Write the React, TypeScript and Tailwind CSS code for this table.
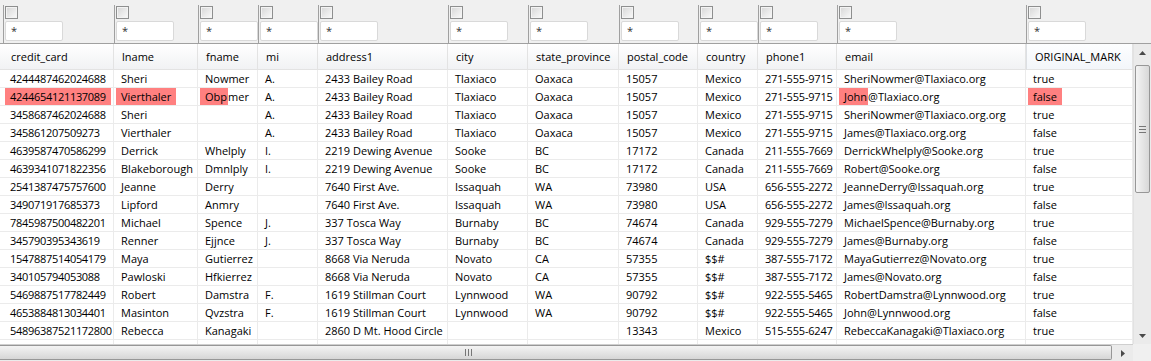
import React from "react";

const GRID =
  "grid grid-cols-[3px_111px_84px_60px_60px_130px_80px_91px_79px_60px_79px_189px_107px]";

const headers = [
  "credit_card",
  "lname",
  "fname",
  "mi",
  "address1",
  "city",
  "state_province",
  "postal_code",
  "country",
  "phone1",
  "email",
  "ORIGINAL_MARK",
];

const rows: string[][] = [
  ["4244487462024688", "Sheri", "Nowmer", "A.", "2433 Bailey Road", "Tlaxiaco", "Oaxaca", "15057", "Mexico", "271-555-9715", "SheriNowmer@Tlaxiaco.org", "true"],
  ["4244654121137089", "Vierthaler", "Obpmer", "A.", "2433 Bailey Road", "Tlaxiaco", "Oaxaca", "15057", "Mexico", "271-555-9715", "John@Tlaxiaco.org", "false"],
  ["3458687462024688", "Sheri", "", "A.", "2433 Bailey Road", "Tlaxiaco", "Oaxaca", "15057", "Mexico", "271-555-9715", "SheriNowmer@Tlaxiaco.org.org", "true"],
  ["345861207509273", "Vierthaler", "", "A.", "2433 Bailey Road", "Tlaxiaco", "Oaxaca", "15057", "Mexico", "271-555-9715", "James@Tlaxiaco.org.org", "false"],
  ["4639587470586299", "Derrick", "Whelply", "I.", "2219 Dewing Avenue", "Sooke", "BC", "17172", "Canada", "211-555-7669", "DerrickWhelply@Sooke.org", "true"],
  ["4639341071822356", "Blakeborough", "Dmnlply", "I.", "2219 Dewing Avenue", "Sooke", "BC", "17172", "Canada", "211-555-7669", "Robert@Sooke.org", "false"],
  ["2541387475757600", "Jeanne", "Derry", "", "7640 First Ave.", "Issaquah", "WA", "73980", "USA", "656-555-2272", "JeanneDerry@Issaquah.org", "true"],
  ["349071917685373", "Lipford", "Anmry", "", "7640 First Ave.", "Issaquah", "WA", "73980", "USA", "656-555-2272", "James@Issaquah.org", "false"],
  ["7845987500482201", "Michael", "Spence", "J.", "337 Tosca Way", "Burnaby", "BC", "74674", "Canada", "929-555-7279", "MichaelSpence@Burnaby.org", "true"],
  ["345790395343619", "Renner", "Ejjnce", "J.", "337 Tosca Way", "Burnaby", "BC", "74674", "Canada", "929-555-7279", "James@Burnaby.org", "false"],
  ["1547887514054179", "Maya", "Gutierrez", "", "8668 Via Neruda", "Novato", "CA", "57355", "$$#", "387-555-7172", "MayaGutierrez@Novato.org", "true"],
  ["340105794053088", "Pawloski", "Hfkierrez", "", "8668 Via Neruda", "Novato", "CA", "57355", "$$#", "387-555-7172", "James@Novato.org", "false"],
  ["5469887517782449", "Robert", "Damstra", "F.", "1619 Stillman Court", "Lynnwood", "WA", "90792", "$$#", "922-555-5465", "RobertDamstra@Lynnwood.org", "true"],
  ["4653884813034401", "Masinton", "Qvzstra", "F.", "1619 Stillman Court", "Lynnwood", "WA", "90792", "$$#", "922-555-5465", "John@Lynnwood.org", "false"],
  ["54896387521172800", "Rebecca", "Kanagaki", "", "2860 D Mt. Hood Circle", "", "", "13343", "Mexico", "515-555-6247", "RebeccaKanagaki@Tlaxiaco.org", "true"],
  ["", "", "", "", "", "", "", "", "", "", "", ""],
];

// row index -> column index -> "full" or number of highlighted chars
const marks: Record<number, Record<number, "full" | number>> = {
  1: { 0: "full", 1: "full", 2: 3, 10: 4, 11: "full" },
};

// digit-heavy columns run a touch narrower in the original font
const tracking: Record<number, string> = {
  0: "tracking-[-0.3px]",
  9: "tracking-[-0.2px]",
};

const Cell = ({ text, mark, track }: { text: string; mark?: "full" | number; track?: string }) => {
  let content: React.ReactNode = <span className="px-[5px]">{text}</span>;
  if (mark === "full") {
    content = <span className="px-[5px] bg-[#ff8080]">{text}</span>;
  } else if (typeof mark === "number") {
    content = (
      <>
        <span className="pl-[5px] pr-[1px] bg-[#ff8080]">{text.slice(0, mark)}</span>
        <span>{text.slice(mark)}</span>
      </>
    );
  }
  return (
    <div
      className={`h-[18px] border-r border-b border-[#ebebeb] pl-[2px] overflow-hidden whitespace-nowrap flex items-stretch leading-[17px] ${
        track ?? ""
      }`}
    >
      {content}
    </div>
  );
};

const Checkbox = () => (
  <div className="w-[13px] h-[13px] border border-[#8e8f8f] bg-gradient-to-br from-[#d6d6d6] to-[#fafafa] shadow-[inset_0_0_0_1px_#f3f3f3]" />
);

const Arrow = ({ dir }: { dir: "up" | "down" | "right" }) => {
  const pts =
    dir === "up" ? "0,4 3.5,0 7,4" : dir === "down" ? "0,0 3.5,4 7,0" : "0,0 4,3.5 0,7";
  const w = dir === "right" ? 4 : 7;
  const h = dir === "right" ? 7 : 4;
  return (
    <svg width={w} height={h} viewBox={`0 0 ${w} ${h}`}>
      <polygon points={pts} fill="#4a4a4a" />
    </svg>
  );
};

const App = () => {
  return (
    <div
      className="w-[1151px] h-[361px] bg-white overflow-hidden flex flex-col text-[11px] text-black"
      style={{ fontFamily: '"Open Sans", "Noto Sans", sans-serif' }}
    >
      {/* Filter bar */}
      <div className="h-[44px] bg-[#f0f0f0] border-b border-[#a0a0a0] flex">
        <div className={GRID}>
          <div />
          {headers.map((h) => (
            <div key={h} className="pt-[5px] h-[43px] overflow-hidden">
              <div className="h-full border-l border-[#a0a0a0] pl-[1px] pt-[1px]">
                <Checkbox />
                <div className="mt-[2px] w-[58px] h-[20px] bg-white border border-[#d9d9d9] rounded-[2px] pl-[5px] leading-[18px] text-[#333]">
                  *
                </div>
              </div>
            </div>
          ))}
        </div>
      </div>

      <div className="flex h-[300px]">
        {/* Table */}
        <div className="w-[1133px] overflow-hidden">
          <div className={`${GRID} h-[26px]`}>
            <div className="bg-gradient-to-b from-white to-[#f1f2f4] border-b border-[#e3e3e3]" />
            {headers.map((h, i) => (
              <div
                key={h}
                className={`border-r border-b border-[#e3e3e3] pl-[8px] leading-[25px] whitespace-nowrap overflow-hidden ${
                  i === headers.length - 1
                    ? "bg-gradient-to-b from-[#fdfeff] to-[#f3f6fa] border-l border-l-[#dcdfe3]"
                    : "bg-gradient-to-b from-white to-[#f1f2f4]"
                }`}
              >
                {h}
              </div>
            ))}
          </div>
          {rows.map((r, ri) => (
            <div key={ri} className={GRID}>
              <div className="h-[18px] border-b border-[#ebebeb]" />
              {r.map((c, ci) => (
                <Cell key={ci} text={c} mark={marks[ri]?.[ci]} track={tracking[ci]} />
              ))}
            </div>
          ))}
        </div>

        {/* Vertical scrollbar */}
        <div className="w-[18px] bg-[#ebebeb] border-l border-[#e2e2e2] flex flex-col">
          <div className="h-[17px] flex items-center justify-center">
            <Arrow dir="up" />
          </div>
          <div className="mt-[4px] h-[128px] mx-[1px] rounded-[2px] border border-[#979797] bg-gradient-to-r from-[#f4f4f4] to-[#d8d8d8] flex flex-col items-center justify-center gap-[2px]">
            <div className="w-[7px] h-px bg-[#777]" />
            <div className="w-[7px] h-px bg-[#777]" />
            <div className="w-[7px] h-px bg-[#777]" />
          </div>
          <div className="flex-1" />
          <div className="h-[17px] flex items-center justify-center">
            <Arrow dir="down" />
          </div>
        </div>
      </div>

      {/* Horizontal scrollbar */}
      <div className="flex h-[17px]">
        <div className="w-[1133px] bg-[#ebebeb] border-t border-[#cfcfcf] flex">
          <div className="w-[1112px] h-[15px] rounded-r-[2px] border border-l-0 border-[#979797] bg-gradient-to-b from-[#f4f4f4] to-[#d6d6d6] flex items-center pl-[465px] gap-[2px]">
            <div className="w-px h-[7px] bg-[#777]" />
            <div className="w-px h-[7px] bg-[#777]" />
            <div className="w-px h-[7px] bg-[#777]" />
          </div>
          <div className="flex-1 flex items-center justify-center">
            <Arrow dir="right" />
          </div>
        </div>
        <div className="w-[18px] bg-[#f0f0f0]" />
      </div>
    </div>
  );
};

export default App;
